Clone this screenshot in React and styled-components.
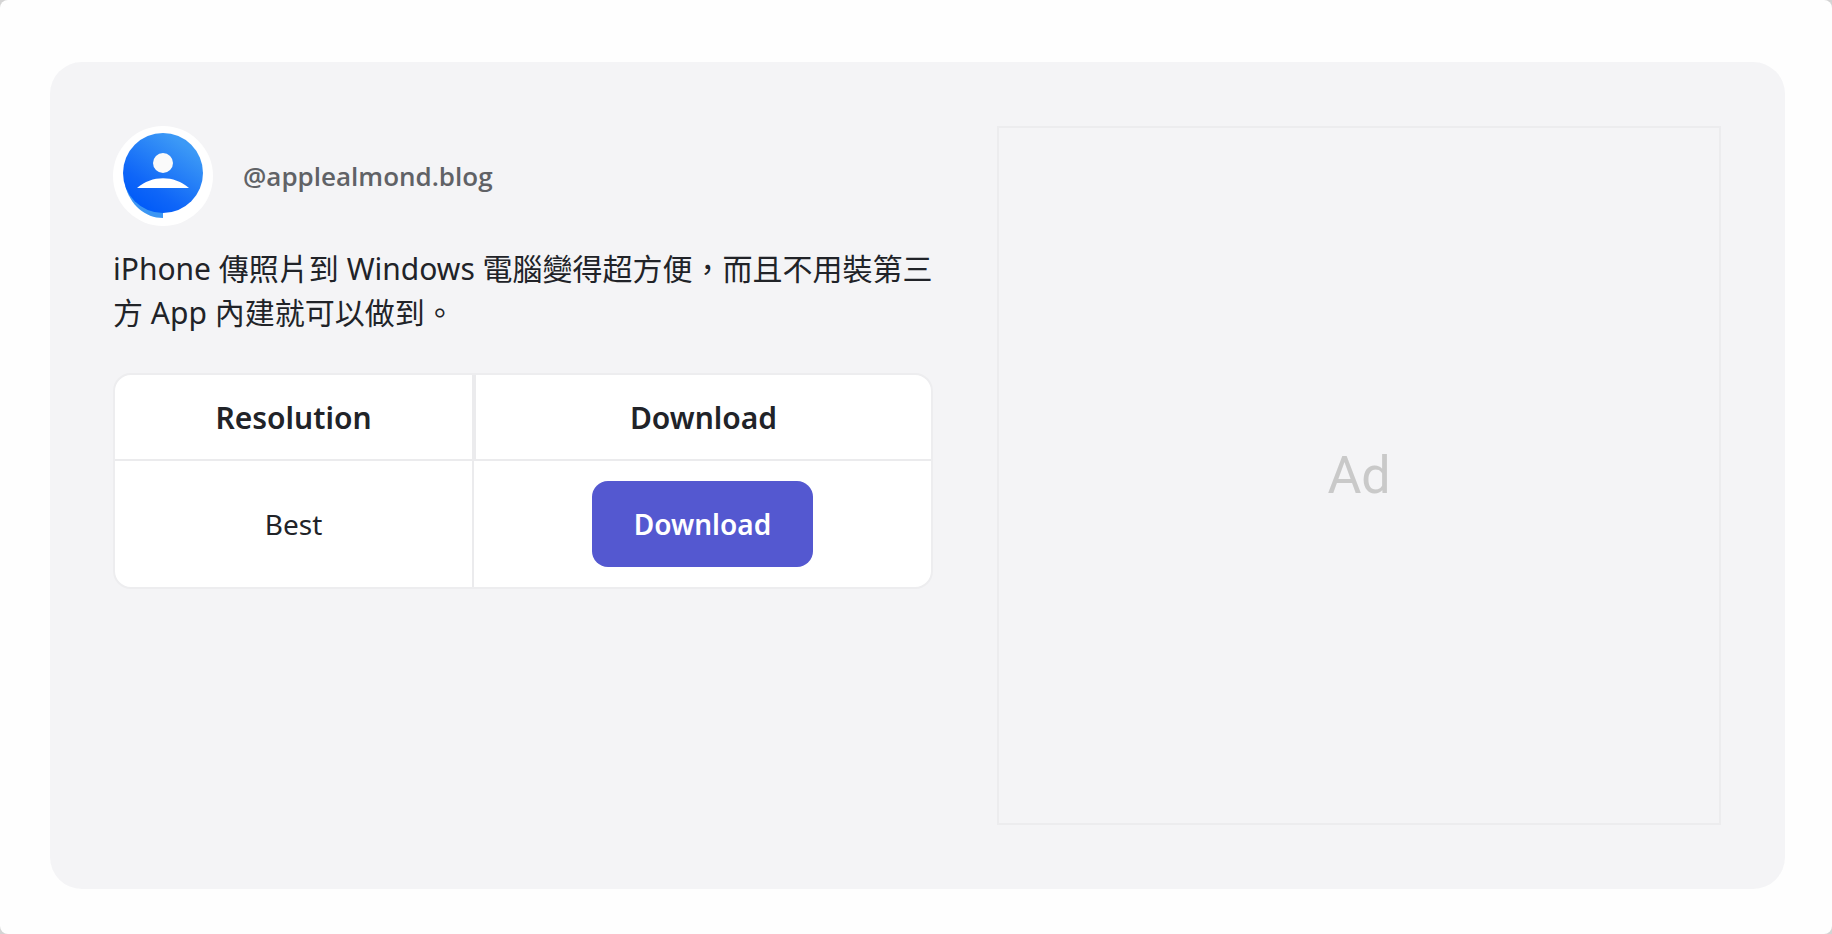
import React from 'react';
import styled, { createGlobalStyle } from 'styled-components';

const GlobalStyle = createGlobalStyle`
  * {
    box-sizing: border-box;
  }

  html {
    background: #d4d4d4;
  }

  body {
    margin: 0;
    font-family: 'Noto Sans', 'Noto Sans CJK TC', sans-serif;
    color: #212328;
  }
`;

const Page = styled.div`
  min-height: 100vh;
  padding: 62px 47px 44px 50px;
  background: #fefefe;
  border-radius: 8px;
`;

const Card = styled.main`
  display: grid;
  grid-template-columns: 820fr 724fr;
  column-gap: 64px;
  padding: 64px 64px 64px 63px;
  background: #f4f4f6;
  border-radius: 32px;
`;

const Profile = styled.header`
  display: flex;
  align-items: center;
  gap: 30px;
`;

const Avatar = styled.svg`
  width: 100px;
  height: 100px;
  flex: none;
`;

const Username = styled.span`
  font-family: 'Open Sans', 'Noto Sans', sans-serif;
  font-size: 26px;
  line-height: 36px;
  font-weight: 600;
  color: #606266;
`;

const Caption = styled.p`
  margin: 21px 0 38px;
  font-size: 30px;
  line-height: 44px;
`;

const TableWrapper = styled.div`
  overflow: hidden;
  background: #fff;
  border: 2px solid #ededef;
  border-radius: 18px;
`;

const Table = styled.table`
  width: 100%;
  border-collapse: separate;
  border-spacing: 0;
  table-layout: fixed;
  text-align: center;
`;

const HeadCell = styled.th`
  width: ${props => props.width};
  height: 86px;
  padding: 0;
  font-size: 30px;
  font-weight: 600;
  border-bottom: 2px solid #ebebed;

  &:first-child {
    border-right: 2px solid #ebebed;
  }

  & + & {
    border-left: 2px solid #ebebed;
  }
`;

const Cell = styled.td`
  padding: 20px 0;
  font-size: 28px;

  &:first-child {
    border-right: 2px solid #ebebed;
  }
`;

const DownloadButton = styled.button`
  display: block;
  margin: 0 auto;
  padding: 22px 42px;
  border: 0;
  border-radius: 16px;
  background: #5458d0;
  color: #fff;
  font-family: inherit;
  font-size: 28px;
  font-weight: 600;
  line-height: 42px;
  cursor: pointer;
`;

const AdSlot = styled.aside`
  display: flex;
  align-items: center;
  justify-content: center;
  min-height: 699px;
  border: 2px solid #ececee;
  color: #c9c9c9;
  font-family: Roboto, sans-serif;
  font-size: 52px;
`;

const FORMATS = ['Best'];

const UserAvatar = () => (
  <Avatar viewBox="0 0 100 100" role="img" aria-label="Profile">
    <defs>
      <linearGradient id="avatarFill" x1="0.3" y1="1" x2="0.85" y2="0.2">
        <stop offset="0" stopColor="#005af8" />
        <stop offset="0.3" stopColor="#0f66f8" />
        <stop offset="1" stopColor="#3c99f6" />
      </linearGradient>
    </defs>
    <circle cx="50" cy="50" r="50" fill="#fff" />
    <path d="M12 59C17 79 32 92 50 92V84Z" fill="#3c96f3" />
    <circle cx="50" cy="47" r="40" fill="url(#avatarFill)" />
    <circle cx="50" cy="37" r="10" fill="#fafafa" />
    <path d="M24 62C39 49 61 49 76 62Z" fill="#fff" />
  </Avatar>
);

class App extends React.Component {
  renderFormat(resolution) {
    return (<tr key={resolution}>
      <Cell>{resolution}</Cell>
      <Cell>
        <DownloadButton type="button">Download</DownloadButton>
      </Cell>
    </tr>);
  }

  render() {
    return (
      <Page>
        <GlobalStyle />
        <Card>
          <section>
            <Profile>
              <UserAvatar />
              <Username>@applealmond.blog</Username>
            </Profile>
            <Caption lang="zh-Hant">
              iPhone 傳照片到 Windows 電腦變得超方便，而且不用裝第三方 App 內建就可以做到。
            </Caption>
            <TableWrapper>
              <Table>
                <thead>
                  <tr>
                    <HeadCell width="44%">Resolution</HeadCell>
                    <HeadCell width="56%">Download</HeadCell>
                  </tr>
                </thead>
                <tbody>
                  {FORMATS.map(resolution => this.renderFormat(resolution))}
                </tbody>
              </Table>
            </TableWrapper>
          </section>
          <AdSlot>Ad</AdSlot>
        </Card>
      </Page>
    );
  }
}

export default App;
